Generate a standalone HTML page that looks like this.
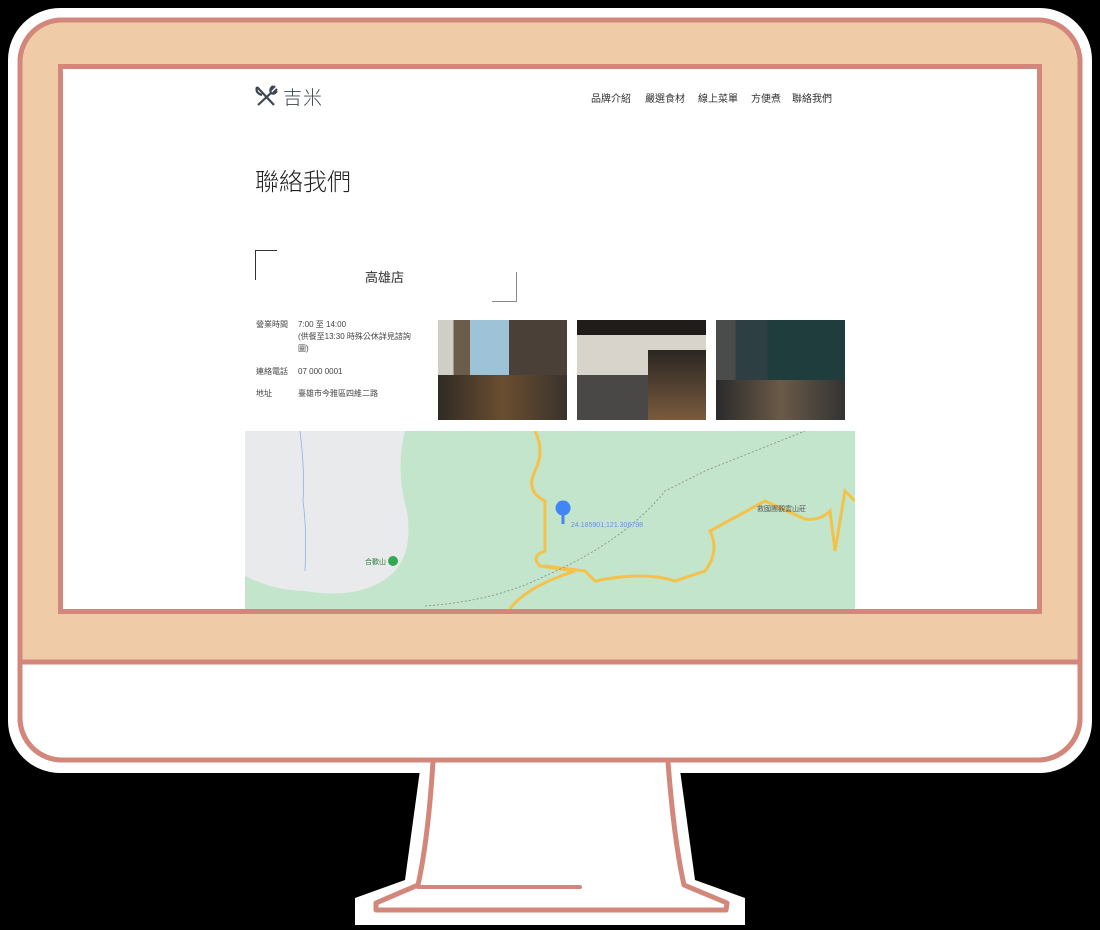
<!DOCTYPE html>
<html><head><meta charset="utf-8"><style>
*{margin:0;padding:0;box-sizing:border-box}
body{width:1100px;height:930px;background:#000;position:relative;overflow:hidden;font-family:"Liberation Serif","Noto Serif CJK SC","Noto Sans CJK TC",serif;color:#222}
svg.frame{position:absolute;left:0;top:0}
.screen{position:absolute;left:63px;top:69px;width:974px;height:540px;background:#fff;overflow:hidden}
.abs{position:absolute}
.nav{font-size:10px;color:#333;top:21px;font-family:"Liberation Sans","Noto Sans CJK TC",sans-serif}
.small{font-size:8px;color:#444;font-family:"Liberation Sans","Noto Sans CJK TC",sans-serif;line-height:12px}
.img{position:absolute;top:251px;width:129px;height:100px}
</style></head><body>
<svg class="frame" width="1100" height="930">
<rect x="8" y="8" width="1084" height="765" rx="52" fill="#fff"/>
<polygon points="420,770 680,770 695,880 745,898 745,925 355,925 355,898 405,880" fill="#fff"/>
<rect x="20" y="20" width="1060" height="740" rx="42" fill="#fff" stroke="#d3877b" stroke-width="5"/>
<path d="M22.5 662 V62 a40 40 0 0 1 40 -40 H1037.5 a40 40 0 0 1 40 40 V662 Z" fill="#f0cba8"/>
<rect x="20" y="20" width="1060" height="740" rx="42" fill="none" stroke="#d3877b" stroke-width="5"/>
<line x1="20" y1="662" x2="1080" y2="662" stroke="#d3877b" stroke-width="5"/>
<rect x="60.5" y="66.5" width="979" height="545" fill="#fff" stroke="#d3877b" stroke-width="5"/>
<path d="M433 762 Q428 840 418 885 L376 903 L376 910 L726 910 L727 903 L684 885 Q674 840 668 762" fill="none" stroke="#d3877b" stroke-width="5" stroke-linejoin="round"/>
<line x1="418" y1="887" x2="580" y2="887" stroke="#d3877b" stroke-width="4" stroke-linecap="round"/>
</svg>
<div class="screen">
  <svg class="abs" style="left:191px;top:14px" width="26" height="26" viewBox="0 0 26 26">
    <path d="M3 4 L20 22 M3 4 Q1 10 8 12" stroke="#3b4650" stroke-width="2.2" fill="none"/>
    <path d="M21 3 L17 7 M23 6 L19 10 M19 3 Q15 6 17 10 Q20 12 23 8 M17 10 L4 22" stroke="#3b4650" stroke-width="2.2" fill="none"/>
  </svg>
  <div class="abs" style="left:220px;top:14px;font-size:19px;color:#3b4650;font-family:'Liberation Sans','Noto Sans CJK TC',sans-serif;font-weight:300;letter-spacing:1px">吉米</div>
  <div class="abs nav" style="left:528px">品牌介紹</div>
  <div class="abs nav" style="left:582px">嚴選食材</div>
  <div class="abs nav" style="left:635px">線上菜單</div>
  <div class="abs nav" style="left:688px">方便煮</div>
  <div class="abs nav" style="left:729px">聯絡我們</div>
  <div class="abs" style="left:192px;top:93px;font-size:24px;color:#222;font-family:'Liberation Sans','Noto Sans CJK TC',sans-serif;font-weight:300">聯絡我們</div>
  <div class="abs" style="left:192px;top:181px;width:22px;height:30px;border-left:1px solid #333;border-top:1px solid #333"></div>
  <div class="abs" style="left:429px;top:203px;width:25px;height:30px;border-right:1px solid #888;border-bottom:1px solid #888"></div>
  <div class="abs" style="left:302px;top:198px;font-size:13px;color:#333;font-family:'Liberation Sans','Noto Sans CJK TC',sans-serif">高雄店</div>
  <div class="abs small" style="left:193px;top:250px">營業時間</div>
  <div class="abs small" style="left:235px;top:250px;width:120px">7:00 至 14:00<br>(供餐至13:30 時殊公休詳見諮詢圖)</div>
  <div class="abs small" style="left:193px;top:297px">連絡電話</div>
  <div class="abs small" style="left:235px;top:297px">07 000 0001</div>
  <div class="abs small" style="left:193px;top:319px">地址</div>
  <div class="abs small" style="left:235px;top:319px">臺雄市今雅區四維二路</div>
  <div class="img" style="left:375px;background:linear-gradient(90deg,#cfcfc8 0 12%,#6b5d4a 12% 25%,#9fc3d6 25% 55%,#4a4038 55% 100%)"><div style="position:absolute;left:0;right:0;bottom:0;height:45%;background:linear-gradient(90deg,#2f2a25,#6b4e30,#3a322c)"></div></div>
  <div class="img" style="left:514px;background:linear-gradient(180deg,#1f1c1a 0 15%,#d8d4cc 15% 55%,#4a4846 55% 100%)"><div style="position:absolute;right:0;top:30%;width:45%;height:70%;background:linear-gradient(#2a2622,#7a5a3e)"></div></div>
  <div class="img" style="left:653px;background:linear-gradient(90deg,#4a4c4c 0 15%,#2e3f44 15% 40%,#1f3d3c 40% 100%)"><div style="position:absolute;left:0;right:0;bottom:0;height:40%;background:linear-gradient(90deg,#2a2a2a,#6a5a48,#333)"></div></div>
  <svg class="abs" style="left:182px;top:362px" width="610" height="178" viewBox="0 0 610 178">
    <rect width="610" height="178" fill="#c2e5cb"/>
    <path d="M0 0 H160 Q150 40 162 80 Q168 120 150 140 Q120 170 60 160 Q30 160 0 145 Z" fill="#e8eaec"/>
    <path d="M55 0 Q60 40 58 70 Q62 100 60 140" stroke="#8fb3e8" fill="none" stroke-width="0.8"/>
    <path d="M290 0 Q300 20 290 40 Q280 60 300 70 L300 120 Q285 125 295 135 L330 140 Q300 150 285 160 Q270 170 265 178" stroke="#f4c24a" stroke-width="3" fill="none"/>
    <path d="M300 135 L340 140 L350 150 Q400 140 430 150 L460 140 Q475 120 465 100 L520 70 L560 88 Q575 90 585 80 L590 120 L600 60 L610 70" stroke="#f4c24a" stroke-width="3" fill="none"/>
    <path d="M180 175 Q250 170 300 145 Q380 110 420 60 L460 40 Q510 20 560 0" stroke="#888" stroke-dasharray="2 2" fill="none" stroke-width="0.8"/>
    <path d="M318 83 a6 6 0 1 1 0.1 0 M318 93 L318 83" fill="#4285f4" stroke="#4285f4" stroke-width="3"/>
    <text x="326" y="96" font-size="7" fill="#6b8fe0" font-family="Liberation Sans">24.185901,121.306798</text>
    <circle cx="148" cy="130" r="5" fill="#34a853"/>
    <text x="120" y="133" font-size="7" fill="#2a7a3a" font-family="Liberation Sans,Noto Sans CJK TC">合歡山</text>
    <text x="512" y="80" font-size="7" fill="#555" font-family="Liberation Sans,Noto Sans CJK TC">救國團觀雲山莊</text>
  </svg>
</div>
</body></html>
